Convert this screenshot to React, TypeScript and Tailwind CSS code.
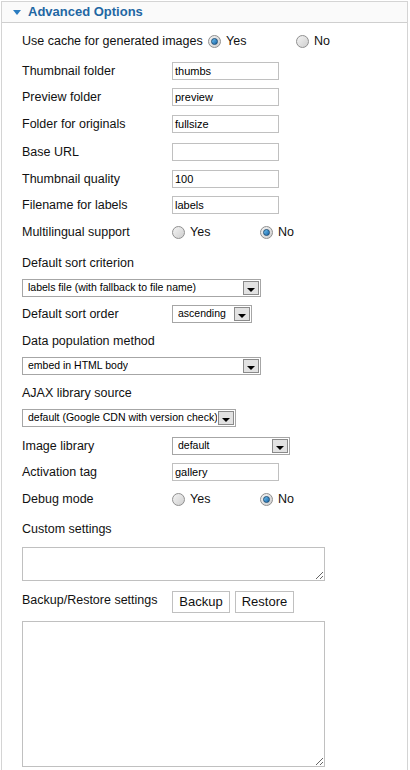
import React from "react";

const font = { fontFamily: '"Liberation Sans", Arial, sans-serif' };

function Radio({ checked }: { checked?: boolean }) {
  return (
    <span className="relative inline-flex h-[13px] w-[13px] shrink-0 items-center justify-center rounded-full border border-[#8f8f8f] bg-gradient-to-br from-[#f4f4f4] to-[#cfcfcf]">
      {checked && (
        <span className="h-[7px] w-[7px] rounded-full border border-[#1d4f78] bg-gradient-to-br from-[#6fc3f2] to-[#1565a8]" />
      )}
    </span>
  );
}

function RadioPair({ yes }: { yes: boolean }) {
  return (
    <div className="flex items-center">
      <div className="flex w-[88px] items-center gap-[5px]">
        <Radio checked={yes} />
        <span>Yes</span>
      </div>
      <div className="flex items-center gap-[5px]">
        <Radio checked={!yes} />
        <span>No</span>
      </div>
    </div>
  );
}

function TextInput({ value }: { value: string }) {
  return (
    <div className="flex h-[18px] w-[107px] items-center border border-[#c0c0c0] bg-white px-[2px] text-[11px] text-black">
      {value}
    </div>
  );
}

function Select({ value, width }: { value: string; width: string }) {
  return (
    <div
      className={`flex h-[18px] items-center justify-between gap-[1px] border border-[#a6a6a6] bg-white pl-[5px] pr-[1px] text-[10.5px] text-black ${width}`}
    >
      <span className="overflow-hidden whitespace-nowrap">{value}</span>
      <span className="flex h-[14px] w-[16px] shrink-0 items-center justify-center border border-[#8a8a8a] bg-[#e2e2e2]">
        <span className="mt-[3px] h-0 w-0 border-x-[4px] border-t-[4px] border-x-transparent border-t-black" />
      </span>
    </div>
  );
}

function Row({
  mt,
  label,
  children,
}: {
  mt: string;
  label: string;
  children?: React.ReactNode;
}) {
  return (
    <div className={`flex h-[20px] items-center ${mt}`}>
      <span className="w-[150px] shrink-0 whitespace-nowrap">{label}</span>
      {children}
    </div>
  );
}

function Label({ mt, label }: { mt: string; label: string }) {
  return (
    <div className={`flex h-[20px] items-center ${mt}`}>
      <span className="whitespace-nowrap">{label}</span>
    </div>
  );
}

function Line({ mt, children }: { mt: string; children: React.ReactNode }) {
  return <div className={`flex h-[20px] items-center ${mt}`}>{children}</div>;
}

export default function App() {
  return (
    <div className="h-[770px] w-[410px] overflow-hidden bg-white" style={font}>
      <div className="ml-[1px] mt-[1px] h-[800px] w-[407px] border border-[#d4d4d4] bg-white">
        <div className="flex h-[21px] items-center border-b border-[#cfcfcf] bg-[#fafafa] pl-[11px]">
          <span className="mr-[7px] h-0 w-0 border-x-[4.5px] border-t-[5px] border-x-transparent border-t-[#2a7cc0]" />
          <span className="text-[13px] font-bold text-[#1f67a3]">Advanced Options</span>
        </div>
        <div className="flex flex-col pl-[20px] text-[12.5px] text-[#111]">
          <div className="mt-[8px] flex h-[20px] items-center">
            <span className="w-[186px] shrink-0 whitespace-nowrap">
              Use cache for generated images
            </span>
            <RadioPair yes={true} />
          </div>
          <Row mt="mt-[10px]" label="Thumbnail folder">
            <TextInput value="thumbs" />
          </Row>
          <Row mt="mt-[6px]" label="Preview folder">
            <TextInput value="preview" />
          </Row>
          <Row mt="mt-[7px]" label="Folder for originals">
            <TextInput value="fullsize" />
          </Row>
          <Row mt="mt-[8px]" label="Base URL">
            <TextInput value="" />
          </Row>
          <Row mt="mt-[7px]" label="Thumbnail quality">
            <TextInput value="100" />
          </Row>
          <Row mt="mt-[6px]" label="Filename for labels">
            <TextInput value="labels" />
          </Row>
          <Row mt="mt-[7px]" label="Multilingual support">
            <RadioPair yes={false} />
          </Row>
          <Label mt="mt-[11px]" label="Default sort criterion" />
          <Line mt="mt-[5px]">
            <Select value="labels file (with fallback to file name)" width="w-[239px]" />
          </Line>
          <Row mt="mt-[6px]" label="Default sort order">
            <Select value="ascending" width="w-[80px]" />
          </Row>
          <Label mt="mt-[7px]" label="Data population method" />
          <Line mt="mt-[5px]">
            <Select value="embed in HTML body" width="w-[239px]" />
          </Line>
          <Label mt="mt-[7px]" label="AJAX library source" />
          <Line mt="mt-[5px]">
            <Select value="default (Google CDN with version check)" width="w-[214px]" />
          </Line>
          <Row mt="mt-[8px]" label="Image library">
            <Select value="default" width="w-[118px]" />
          </Row>
          <Row mt="mt-[6px]" label="Activation tag">
            <TextInput value="gallery" />
          </Row>
          <Row mt="mt-[7px]" label="Debug mode">
            <RadioPair yes={false} />
          </Row>
          <Label mt="mt-[10px]" label="Custom settings" />
          <textarea
            readOnly
            className="mt-[8px] block h-[34px] w-[303px] border border-[#c0c0c0] bg-white outline-none"
          />
          <div className="mt-[10px] flex h-[22px] items-center">
            <span className="-mt-[4px] w-[150px] shrink-0 whitespace-nowrap">
              Backup/Restore settings
            </span>
            <div className="flex items-center gap-[5px] text-[13px]">
              <div className="flex h-[22px] w-[58px] items-center justify-center border border-[#c0c0c0] bg-white">
                Backup
              </div>
              <div className="flex h-[22px] w-[59px] items-center justify-center border border-[#c0c0c0] bg-white">
                Restore
              </div>
            </div>
          </div>
          <textarea
            readOnly
            className="mt-[8px] block h-[146px] w-[303px] border border-[#c0c0c0] bg-white outline-none"
          />
        </div>
      </div>
    </div>
  );
}
